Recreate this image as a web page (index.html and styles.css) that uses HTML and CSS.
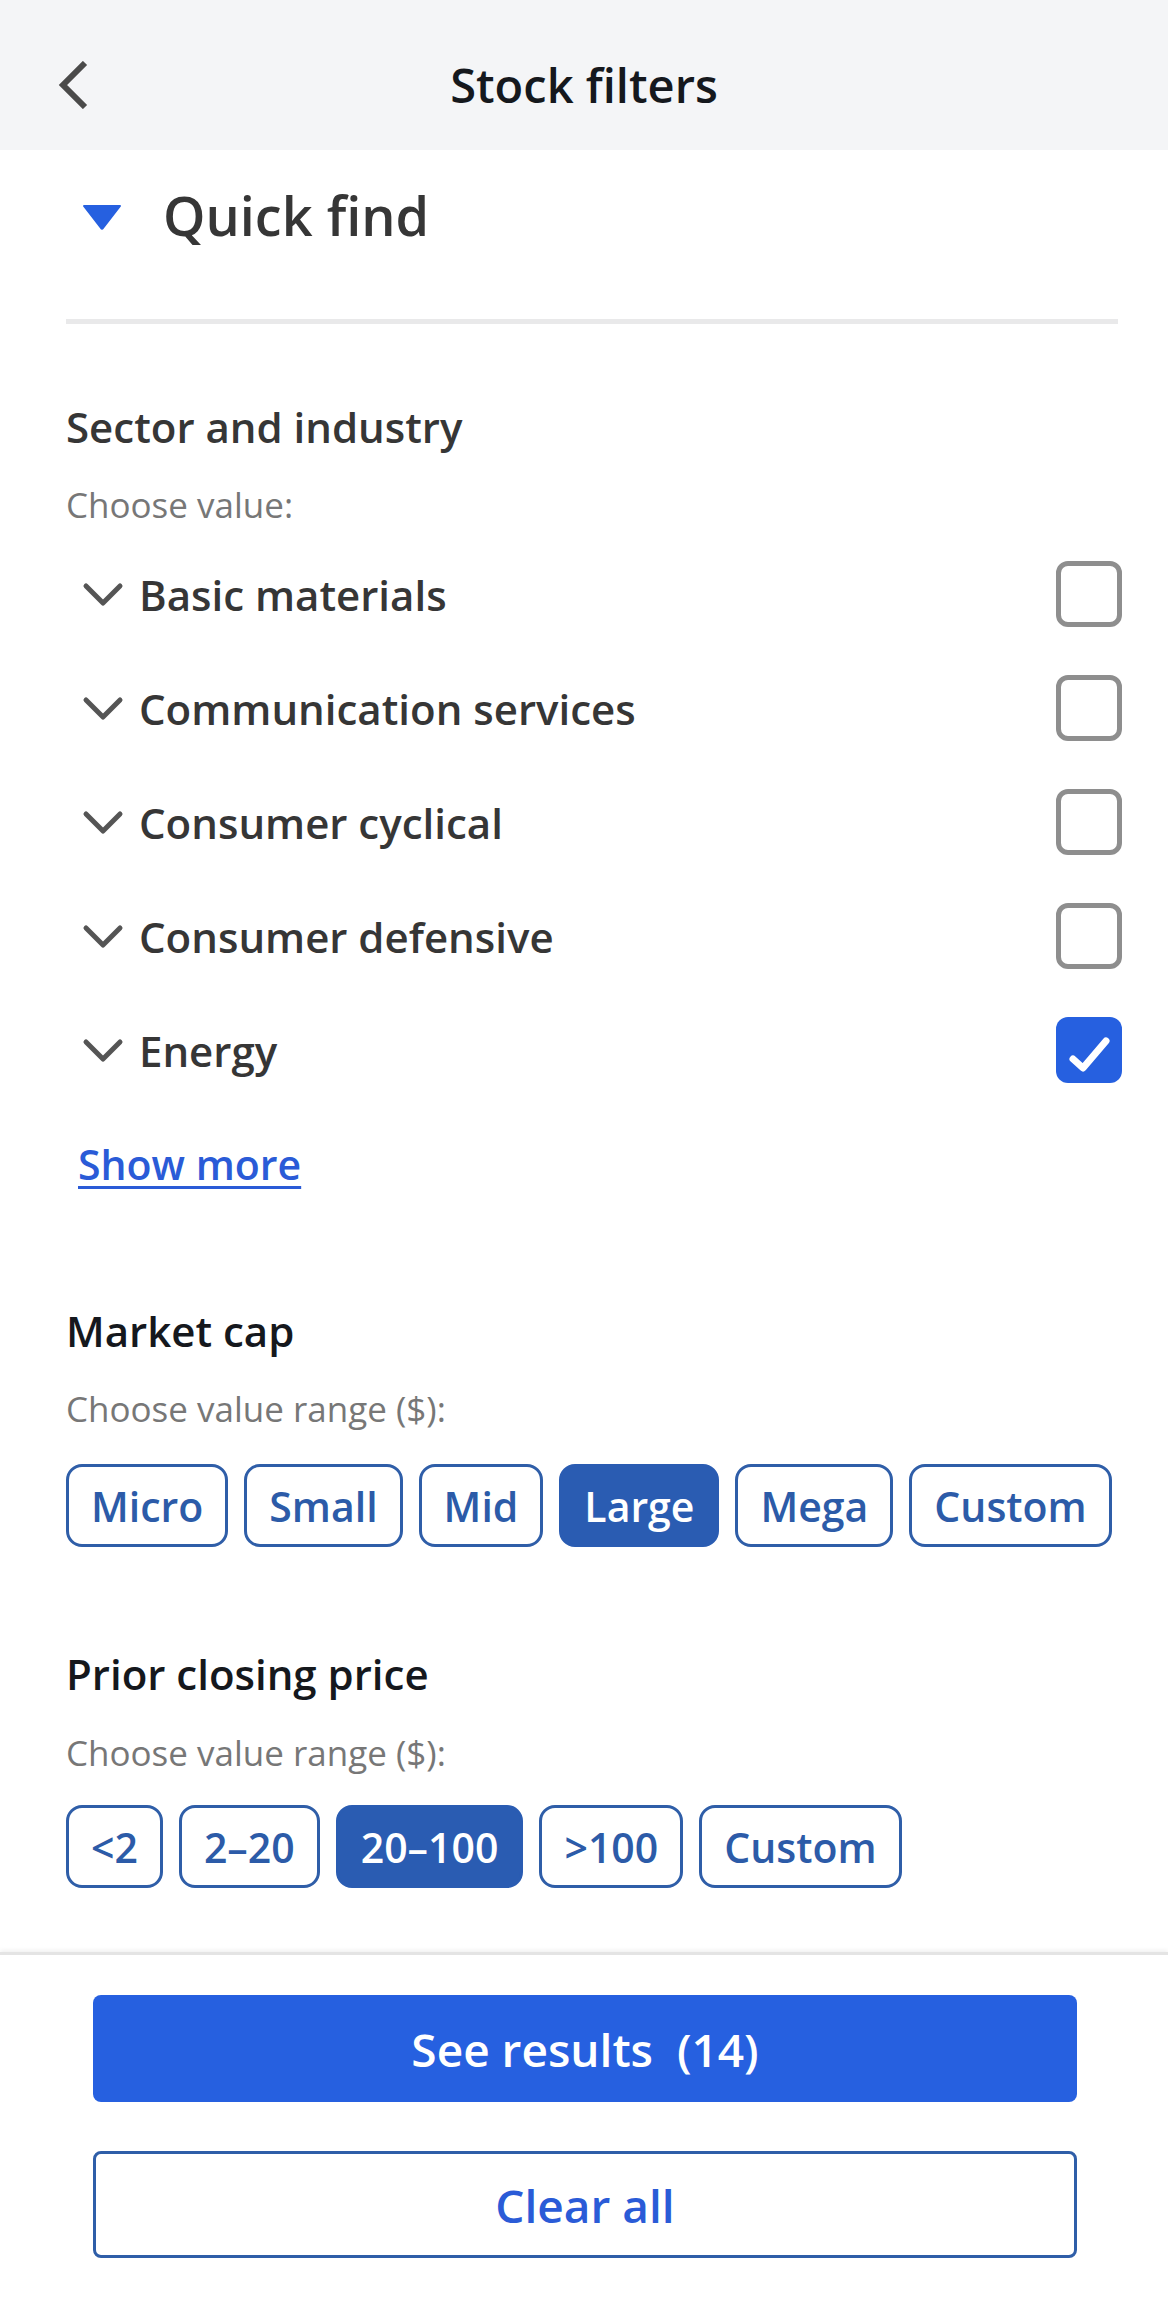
FILE: index.html
```html
<!DOCTYPE html>
<html lang="en">
<head>
<meta charset="utf-8">
<title>Stock filters</title>
<link rel="stylesheet" href="styles.css">
</head>
<body>
<div class="app">
  <header class="topbar">
    <button class="back" aria-label="Back">
      <svg viewBox="0 0 32 48" width="32" height="48"><path d="M27 2 L5 24 L27 46" fill="none" stroke="#4a4a4a" stroke-width="6" stroke-linejoin="miter"/></svg>
    </button>
    <h1 class="title">Stock filters</h1>
    <span class="spacer"></span>
  </header>

  <main class="content">
    <div class="quickfind">
      <svg class="tri" viewBox="0 0 40 26" width="40" height="26"><path d="M2 2 H38 L21 24 Q20 25.5 19 24 Z" fill="#2660e0" stroke="#2660e0" stroke-width="2" stroke-linejoin="round"/></svg>
      <span class="qf-label">Quick find</span>
    </div>
    <div class="divider"></div>

    <section class="group">
      <h2 class="group-title muted-dark">Sector and industry</h2>
      <p class="hint">Choose value:</p>
      <ul class="sectors">
        <li class="sector"><svg class="chev" viewBox="0 0 42 26" width="42" height="26"><path d="M4 4 L21 21 L38 4" fill="none" stroke="#555" stroke-width="5" stroke-linecap="round" stroke-linejoin="round"/></svg><span class="sector-name">Basic materials</span><span class="box"></span></li>
        <li class="sector"><svg class="chev" viewBox="0 0 42 26" width="42" height="26"><path d="M4 4 L21 21 L38 4" fill="none" stroke="#555" stroke-width="5" stroke-linecap="round" stroke-linejoin="round"/></svg><span class="sector-name">Communication services</span><span class="box"></span></li>
        <li class="sector"><svg class="chev" viewBox="0 0 42 26" width="42" height="26"><path d="M4 4 L21 21 L38 4" fill="none" stroke="#555" stroke-width="5" stroke-linecap="round" stroke-linejoin="round"/></svg><span class="sector-name">Consumer cyclical</span><span class="box"></span></li>
        <li class="sector"><svg class="chev" viewBox="0 0 42 26" width="42" height="26"><path d="M4 4 L21 21 L38 4" fill="none" stroke="#555" stroke-width="5" stroke-linecap="round" stroke-linejoin="round"/></svg><span class="sector-name">Consumer defensive</span><span class="box"></span></li>
        <li class="sector"><svg class="chev" viewBox="0 0 42 26" width="42" height="26"><path d="M4 4 L21 21 L38 4" fill="none" stroke="#555" stroke-width="5" stroke-linecap="round" stroke-linejoin="round"/></svg><span class="sector-name">Energy</span><span class="box checked"><svg viewBox="0 0 66 66" width="66" height="66"><path d="M17 42 L27 51 L50 24" fill="none" stroke="#fff" stroke-width="7" stroke-linecap="round" stroke-linejoin="round"/></svg></span></li>
      </ul>
      <a class="showmore" href="#">Show more</a>
    </section>

    <section class="group market">
      <h2 class="group-title">Market cap</h2>
      <p class="hint">Choose value range ($):</p>
      <div class="chips">
        <span class="chip">Micro</span>
        <span class="chip">Small</span>
        <span class="chip">Mid</span>
        <span class="chip on">Large</span>
        <span class="chip">Mega</span>
        <span class="chip">Custom</span>
      </div>
    </section>

    <section class="group price">
      <h2 class="group-title">Prior closing price</h2>
      <p class="hint">Choose value range ($):</p>
      <div class="chips">
        <span class="chip">&lt;2</span>
        <span class="chip">2–20</span>
        <span class="chip on">20–100</span>
        <span class="chip">&gt;100</span>
        <span class="chip">Custom</span>
      </div>
    </section>
  </main>

  <footer class="actions">
    <button class="btn primary">See results&nbsp; (14)</button>
    <button class="btn outline">Clear all</button>
  </footer>
</div>
</body>
</html>
```
FILE: styles.css
```css
* { box-sizing: border-box; }
html, body { margin: 0; padding: 0; }
body {
  font-family: "Open Sans", "Noto Sans", "Liberation Sans", sans-serif;
  background: #fff;
  color: #333;
}
.app {
  width: 1168px;
  height: 2308px;
  display: flex;
  flex-direction: column;
  overflow: hidden;
}
.topbar {
  height: 150px;
  flex: none;
  background: #f4f5f7;
  display: grid;
  grid-template-columns: 1fr auto 1fr;
  align-items: center;
  padding: 0 0 0 58px;
}
.back {
  justify-self: start;
  background: none;
  border: 0;
  padding: 0;
  width: 32px;
  height: 48px;
  display: flex;
  margin-top: 20px;
}
.title {
  margin: 0;
  padding: 20px 58px 0 0;
  font-size: 47px;
  font-weight: 600;
  color: #15181d;
  line-height: 1;
}
.content {
  flex: 1;
  padding: 0 46px 0 66px;
}
.quickfind {
  height: 130px;
  display: flex;
  align-items: center;
  padding-left: 16px;
}
.tri { margin-top: 4px; }
.qf-label {
  margin-left: 41px;
  font-size: 54px;
  font-weight: 600;
  color: #363636;
  line-height: 1;
}
.divider {
  margin-top: 39px;
  margin-right: 4px;
  height: 5px;
  background: #e9e9ea;
}
.group-title {
  margin: 0;
  font-size: 42px;
  font-weight: 600;
  line-height: 60px;
  color: #15181d;
}
.group-title.muted-dark { color: #363636; }
.group:first-of-type .group-title { margin-top: 73px; }
.hint {
  margin: 23px 0 0;
  font-size: 35px;
  line-height: 50px;
  color: #777;
}
.sectors {
  list-style: none;
  margin: 7px 0 0;
  padding: 0;
}
.sector {
  height: 114px;
  display: flex;
  align-items: center;
  padding-left: 16px;
}
.chev { flex: none; margin-top: 2px; }
.sector-name {
  flex: 1;
  margin-left: 15px;
  font-size: 42px;
  font-weight: 600;
  color: #363636;
}
.box {
  width: 66px;
  height: 66px;
  border: 5px solid #8e8e8e;
  border-radius: 12px;
  flex: none;
}
.box.checked {
  border: 0;
  background: #2660e0;
  display: flex;
}
.showmore {
  display: inline-block;
  margin: 27px 0 0 12px;
  font-size: 41px;
  font-weight: 600;
  line-height: 60px;
  color: #2a5bd7;
  text-decoration: underline;
  text-decoration-thickness: 3px;
  text-underline-offset: 6px;
}
.market .group-title { margin-top: 107px; }
.price .group-title { margin-top: 97px; }
.price .hint { margin-top: 24px; }
.chips {
  display: flex;
  gap: 16px;
  margin-top: 30px;
}
.price .chips { margin-top: 27px; }
.chip {
  height: 83px;
  padding: 0 22px;
  display: flex;
  align-items: center;
  border: 3px solid #2f5ea8;
  border-radius: 16px;
  font-size: 41px;
  font-weight: 600;
  color: #2c5ba8;
}
.chip.on {
  background: #2a5cb2;
  border-color: #2a5cb2;
  color: #fff;
}
.actions {
  flex: none;
  height: 356px;
  border-top: 3px solid #e4e4e4;
  box-shadow: 0 -2px 4px rgba(0,0,0,0.06);
  padding: 40px 91px 0 93px;
  display: flex;
  flex-direction: column;
  gap: 49px;
}
.btn {
  height: 107px;
  width: 100%;
  border-radius: 8px;
  font-family: inherit;
  font-size: 46px;
  font-weight: 600;
}
.btn.primary {
  background: #2660e0;
  border: 0;
  color: #fff;
}
.btn.outline {
  background: #fff;
  border: 3px solid #2f5ea8;
  color: #2a5bd7;
}
```
